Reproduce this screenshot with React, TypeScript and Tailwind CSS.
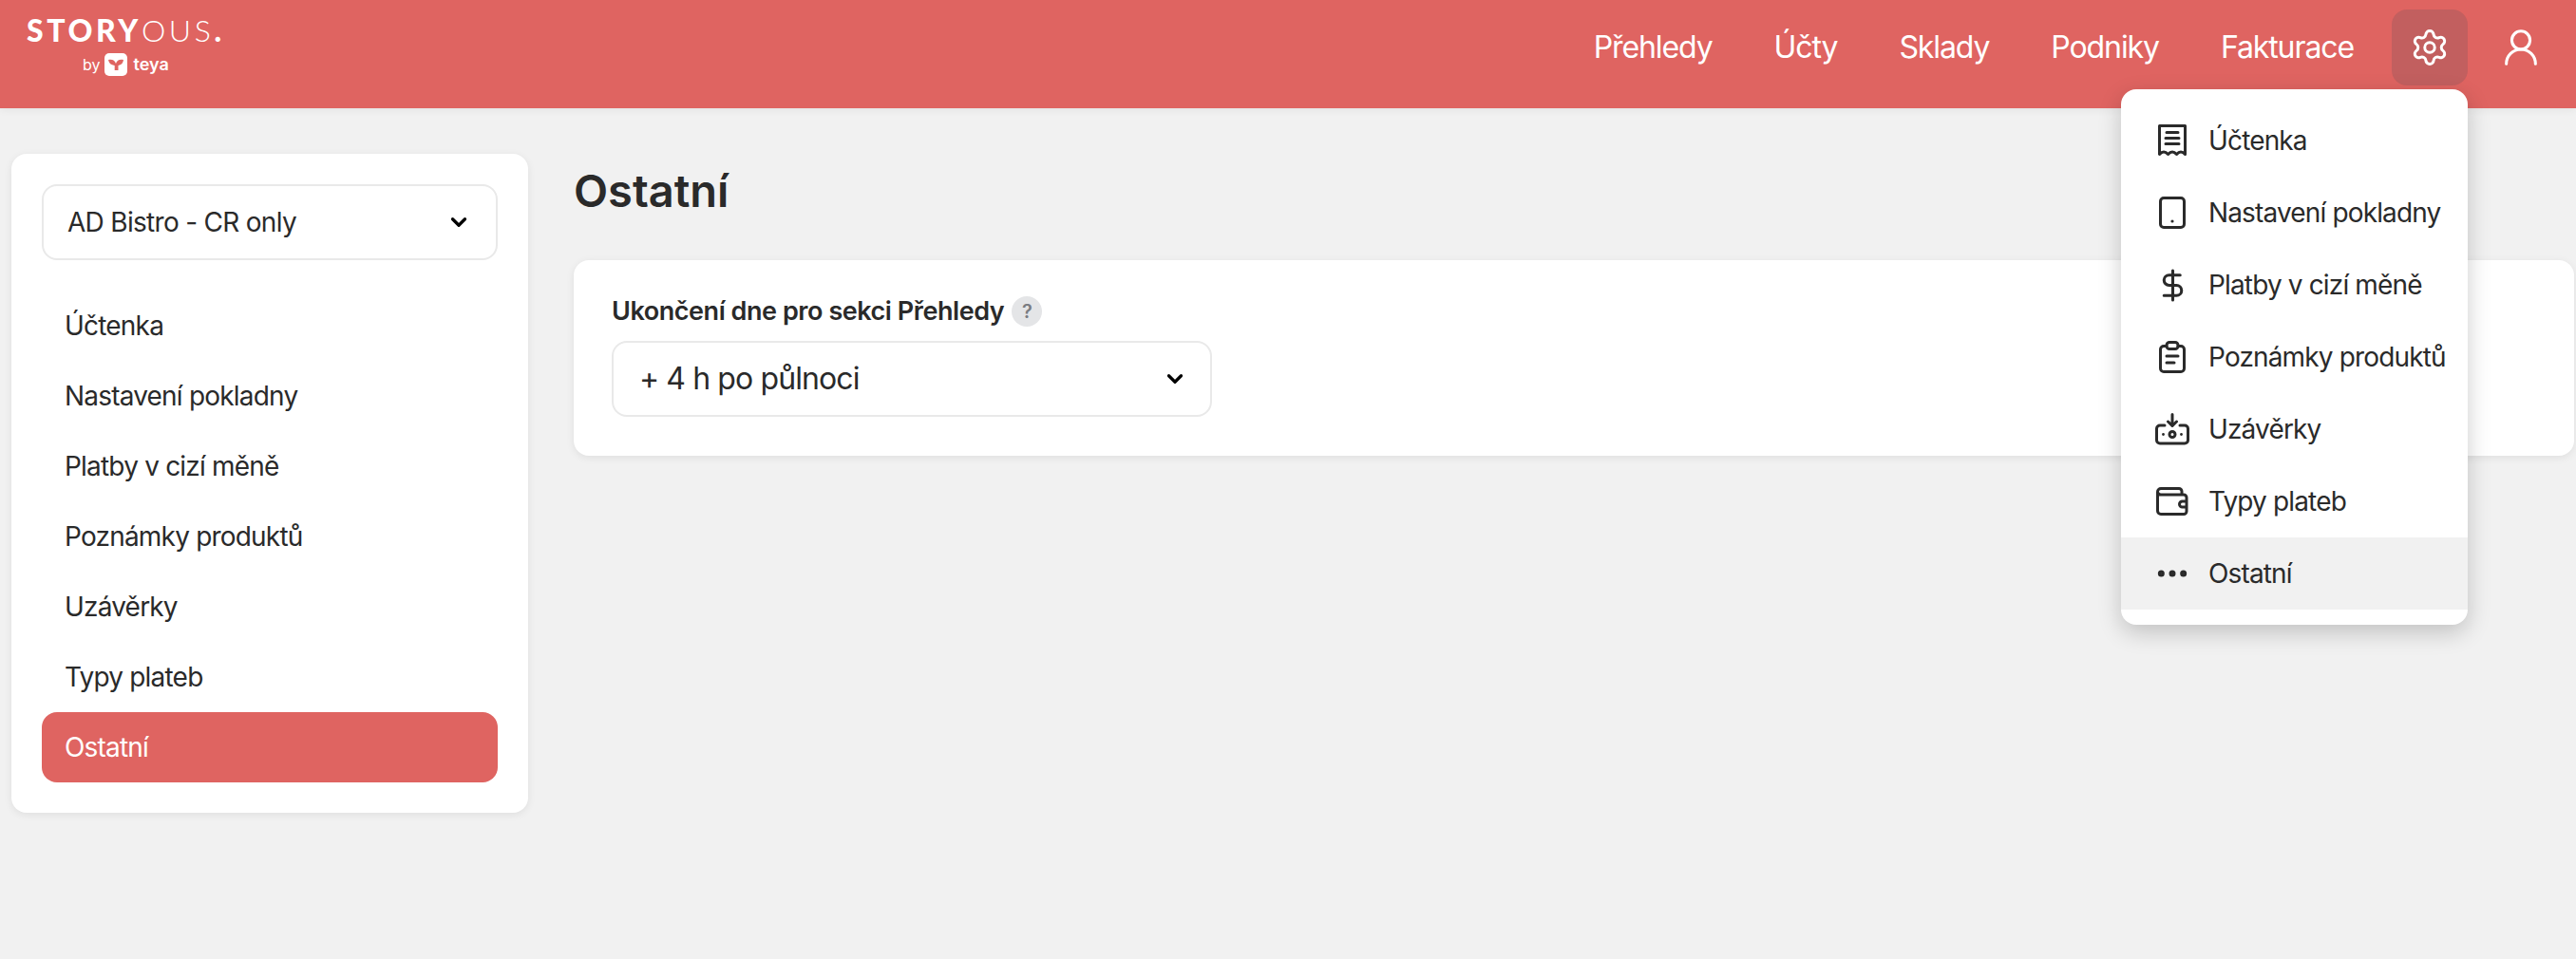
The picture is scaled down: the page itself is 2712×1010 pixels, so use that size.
import { ChevronDown, DollarSign, Ellipsis, Settings, UserRound } from "lucide-react";

const settingsLinks = [
  "Účtenka",
  "Nastavení pokladny",
  "Platby v cizí měně",
  "Poznámky produktů",
  "Uzávěrky",
  "Typy plateb",
  "Ostatní",
];

const navLinks = ["Přehledy", "Účty", "Sklady", "Podniky", "Fakturace"];

function ReceiptIcon() {
  return (
    <svg viewBox="0 0 30 34" className="w-[30px] h-[34px]" fill="none" stroke="#2a2a2a" strokeWidth="3" strokeLinejoin="round">
      <path d="M1.5 31.500V1.500h27v30q-4.500-5-9 0q-4.500-5-9 0q-4.500-5-9 0z" />
      <path d="M9 8.500h12M8 14.500h14M8 20.500h14" strokeLinecap="round" />
    </svg>
  );
}

function TabletIcon() {
  return (
    <svg viewBox="0 0 28 34" className="w-[28px] h-[34px]" fill="none" stroke="#2a2a2a" strokeWidth="3">
      <rect x="1.5" y="1.5" width="25" height="31" rx="3.5" />
      <circle cx="14" cy="26" r="1.6" fill="#2a2a2a" stroke="none" />
    </svg>
  );
}

function ClipboardIcon() {
  return (
    <svg viewBox="0 0 28 34" className="w-[28px] h-[34px]" fill="none" stroke="#2a2a2a" strokeWidth="3" strokeLinecap="round">
      <path d="M8 5.500H5a3.500 3.500 0 0 0-3.500 3.500v20A3.500 3.500 0 0 0 5 32.500h18a3.500 3.500 0 0 0 3.500-3.500V9A3.500 3.500 0 0 0 23 5.500h-3" />
      <rect x="8" y="1.500" width="12" height="7" rx="3" />
      <path d="M8 16h12M8 23h8" />
    </svg>
  );
}

function ClosingIcon() {
  return (
    <svg viewBox="0 0 36 34" className="w-[36px] h-[34px]" fill="none" stroke="#2a2a2a" strokeWidth="3" strokeLinecap="round" strokeLinejoin="round">
      <path d="M10 13H5a3.500 3.500 0 0 0-3.500 3.500v12A3.500 3.500 0 0 0 5 32h26a3.500 3.500 0 0 0 3.500-3.500v-12A3.500 3.500 0 0 0 31 13h-5" />
      <path d="M18 1.500v12M13.500 9l4.500 4.500L22.500 9" />
      <circle cx="18" cy="22.500" r="3" />
      <circle cx="8.500" cy="22.500" r="1.400" fill="#2a2a2a" stroke="none" />
      <circle cx="27.500" cy="22.500" r="1.400" fill="#2a2a2a" stroke="none" />
    </svg>
  );
}

function WalletIcon() {
  return (
    <svg viewBox="0 0 34 30" className="w-[34px] h-[30px]" fill="none" stroke="#2a2a2a" strokeWidth="3" strokeLinejoin="round">
      <path d="M27 8V4.500a3 3 0 0 0-3-3H5A3.500 3.500 0 0 0 1.500 5v20A3.500 3.500 0 0 0 5 28.500h24a3 3 0 0 0 3-3V11a3 3 0 0 0-3-3H5A3.500 3.500 0 0 1 1.500 5" />
      <path d="M32 15h-4.500a3 3 0 0 0 0 6H32" />
    </svg>
  );
}

const menuIcons = [
  <ReceiptIcon />,
  <TabletIcon />,
  <DollarSign className="w-[37px] h-[37px] text-[#2a2a2a]" strokeWidth={2} />,
  <ClipboardIcon />,
  <ClosingIcon />,
  <WalletIcon />,
  <Ellipsis className="w-[40px] h-[40px] text-[#2a2a2a]" strokeWidth={2.2} />,
];

function Logo() {
  return (
    <div className="w-[240px] -mt-[5px] text-white font-['Lato',sans-serif]">
      <div className="text-[32px] leading-[33px] tracking-[3.6px] whitespace-nowrap">
        <span className="font-black">STORY</span>
        <span className="font-light">OUS</span>
        <span className="font-black">.</span>
      </div>
      <div className="flex items-center gap-[5px] ml-[59px] mt-[8px]">
        <span className="text-[16px] leading-[24px] font-['Inter',sans-serif]">by</span>
        <svg viewBox="0 0 24 24" className="w-[24px] h-[24px]">
          <rect width="24" height="24" rx="5" fill="#fff" />
          <path d="M4 7c4-1 7 .500 8 4 1-3.500 4-5 8-4-.300 3.500-2.500 5.500-5.500 6v5h-3.800v-5C7 12.500 4.500 10.500 4 7z" fill="#df6461" />
        </svg>
        <span className="text-[18px] leading-[24px] font-semibold font-['Inter',sans-serif] ml-[1px]">teya</span>
      </div>
    </div>
  );
}

function SelectBox({ label, className, textClass }: { label: string; className: string; textClass: string }) {
  return (
    <div className={`flex items-center justify-between h-[80px] bg-white border-2 border-[#e9e9e9] rounded-2xl ${className}`}>
      <span className={textClass}>{label}</span>
      <ChevronDown className="w-[26px] h-[26px] text-black" strokeWidth={3} />
    </div>
  );
}

function App() {
  return (
    <div className="relative h-[1010px] bg-[#f1f1f1] overflow-hidden text-[#2a2a2a] font-['Inter',sans-serif]">
      <header className="flex items-start justify-between h-[114px] pl-[28px] pr-[35px] pt-[20px] bg-[#df6461] shadow-[0_2px_8px_rgba(0,0,0,0.06)]">
        <Logo />
        <nav className="flex items-center h-[60px] text-white">
          <div className="flex items-center gap-[65px] text-[32px] tracking-[-1.1px]">
            {navLinks.map((link) => (
              <a key={link}>{link}</a>
            ))}
          </div>
          <div className="flex items-center justify-center w-[80px] h-[80px] ml-[40px] rounded-2xl bg-[#c25f5f]">
            <Settings className="w-[42px] h-[42px]" strokeWidth={1.7} />
          </div>
          <UserRound className="w-[46px] h-[46px] ml-[33px]" strokeWidth={1.6} />
        </nav>
      </header>

      <main className="flex items-start gap-[48px] pl-[12px] pr-[2px] pt-[48px]">
        <aside className="w-[544px] shrink-0 h-[694px] px-[32px] pt-[32px] bg-white rounded-2xl shadow-[0_2px_8px_rgba(0,0,0,0.08)]">
          <SelectBox label="AD Bistro - CR only" className="pl-[25px] pr-[26px]" textClass="text-[28px] tracking-[-0.7px]" />
          <ul className="mt-[32px] text-[28px] tracking-[-0.8px]">
            {settingsLinks.map((link) => (
              <li
                key={link}
                className={`flex items-center h-[74px] px-[24px] rounded-2xl ${
                  link === "Ostatní" ? "bg-[#df6461] text-white" : ""
                }`}
              >
                {link}
              </li>
            ))}
          </ul>
        </aside>

        <section className="flex-1 min-w-0">
          <h1 className="h-[64px] mt-[7px] text-[47px] leading-[64px] font-semibold">Ostatní</h1>
          <div className="h-[206px] mt-[41px] px-[40px] pt-[36px] bg-white rounded-2xl shadow-[0_2px_8px_rgba(0,0,0,0.08)]">
            <div className="flex items-center gap-[8px] h-[36px] text-[27px] font-semibold tracking-[-0.45px]">
              Ukončení dne pro sekci Přehledy
              <span className="flex items-center justify-center w-[32px] h-[32px] rounded-full bg-[#e4e5e7] text-[20px] font-semibold text-[#7b7d82]">
                ?
              </span>
            </div>
            <SelectBox label="+ 4 h po půlnoci" className="w-[632px] mt-[13px] pl-[27px] pr-[24px]" textClass="text-[32px] tracking-[-0.9px]" />
          </div>
        </section>
      </main>

      {/* dropdown lies over the page */}
      <div className="absolute left-[2233px] top-[94px] w-[365px] py-[16px] bg-white rounded-2xl shadow-[0_8px_24px_rgba(0,0,0,0.2)]">
        {settingsLinks.map((link, i) => (
          <div
            key={link}
            className={`flex items-center h-[76px] text-[28px] tracking-[-0.85px] ${link === "Ostatní" ? "bg-[#f1f1f1]" : ""}`}
          >
            <span className="flex items-center justify-center w-[46px] ml-[31px] mr-[15px] shrink-0">{menuIcons[i]}</span>
            {link}
          </div>
        ))}
      </div>
    </div>
  );
}

export default App;
